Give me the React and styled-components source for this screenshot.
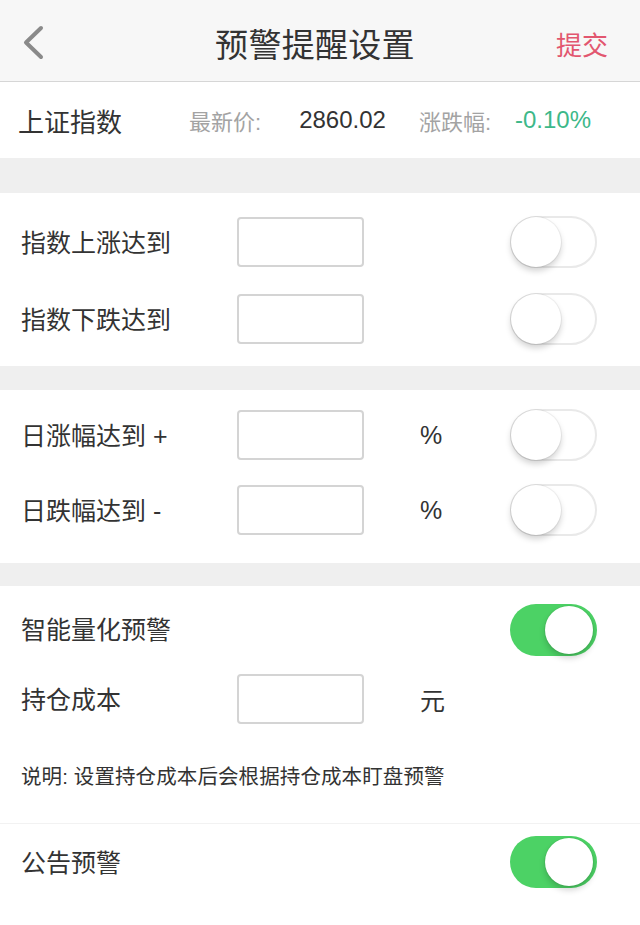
import React, { useState } from "react";
import styled, { createGlobalStyle } from "styled-components";

const Global = createGlobalStyle`
  html, body { margin: 0; padding: 0; }
  body {
    font-family: "Liberation Sans", "Noto Sans CJK SC", sans-serif;
    background: #efefef;
    color: #333;
  }
  * { box-sizing: border-box; }
`;

const Page = styled.div`
  width: 640px;
  min-height: 925px;
  display: flex;
  flex-direction: column;
  background: #efefef;
`;

const NavBar = styled.header`
  height: 82px;
  background: #f7f7f7;
  border-bottom: 1px solid #d6d6d6;
  display: grid;
  grid-template-columns: 1fr auto 1fr;
  align-items: center;
  padding: 5px 32px 0 22px;
`;

const BackButton = styled.button`
  justify-self: start;
  border: 0;
  background: none;
  padding: 0;
  display: flex;
  align-items: center;
  cursor: pointer;
`;

const Title = styled.h1`
  margin: 0;
  font-size: 33px;
  font-weight: 400;
  color: #333;
  letter-spacing: 0.3px;
`;

const SubmitButton = styled.button`
  justify-self: end;
  border: 0;
  background: none;
  padding: 0;
  font-family: inherit;
  font-size: 26px;
  color: #e2566f;
  cursor: pointer;
`;

const InfoRow = styled.div`
  height: 76px;
  background: #fff;
  display: flex;
  align-items: center;
  padding-left: 18px;
`;

const IndexName = styled.span`
  font-size: 26px;
  color: #333;
  width: 171px;
`;

const InfoLabel = styled.span`
  font-size: 22px;
  color: #a3a3a3;
  margin-right: ${(p) => p.$gap}px;
`;

const InfoValue = styled.span`
  font-size: 24px;
  color: ${(p) => p.$color || "#333"};
  margin-right: ${(p) => p.$gap || 0}px;
`;

const Section = styled.section`
  background: #fff;
  margin-top: ${(p) => p.$mt}px;
  padding: ${(p) => p.$pt}px 0 ${(p) => p.$pb}px;
  display: flex;
  flex-direction: column;
  gap: ${(p) => p.$gap || 0}px;
  flex: ${(p) => (p.$grow ? 1 : "none")};
  border-bottom: ${(p) => (p.$divider ? "1px solid #f2f2f2" : "none")};
`;

const Row = styled.div`
  height: ${(p) => p.$h || 50}px;
  margin-top: ${(p) => p.$mt || 0}px;
  display: grid;
  grid-template-columns: 216px 127px 1fr 87px;
  align-items: center;
  padding: 0 43px 0 21px;
`;

const Label = styled.span`
  font-size: 25px;
  color: #333;
  white-space: nowrap;
  margin-top: -3px;
`;

const InputBox = styled.input`
  width: 127px;
  height: 50px;
  border: 2px solid #d4d4d4;
  border-radius: 4px;
  background: #fff;
  font-size: 22px;
  padding: 0 8px;
  outline: none;
`;

const Unit = styled.span`
  font-size: 25px;
  color: #333;
  padding-left: 56px;
`;

const Track = styled.button`
  position: relative;
  width: 87px;
  height: 52px;
  border-radius: 26px;
  padding: 0;
  cursor: pointer;
  border: ${(p) => (p.$on ? "0" : "2px solid #e9e9e9")};
  background: ${(p) => (p.$on ? "#4cd265" : "#fff")};
`;

const Knob = styled.span`
  position: absolute;
  top: ${(p) => (p.$on ? 2 : -1)}px;
  left: ${(p) => (p.$on ? "35px" : "-1px")};
  width: ${(p) => (p.$on ? 48 : 50)}px;
  height: ${(p) => (p.$on ? 48 : 50)}px;
  border-radius: 50%;
  background: #fff;
  box-shadow: 0 4px 6px rgba(0, 0, 0, 0.18), 0 0 0 1px rgba(0, 0, 0, 0.05);
`;

const Note = styled.p`
  margin: 39px 0 0;
  padding-left: 21px;
  font-size: 20.5px;
  letter-spacing: 0.1px;
  line-height: 28px;
  color: #333;
`;

function Toggle({ initial }) {
  const [on, setOn] = useState(initial);
  return (
    <Track $on={on} onClick={() => setOn(!on)} aria-pressed={on}>
      <Knob $on={on} />
    </Track>
  );
}

function Chevron() {
  return (
    <svg width="24" height="36" viewBox="0 0 24 36">
      <polyline
        points="19,3 4,17.5 19,32"
        fill="none"
        stroke="#8a8a8a"
        strokeWidth="4"
        strokeLinecap="round"
        strokeLinejoin="round"
      />
    </svg>
  );
}

export default function App() {
  return (
    <>
      <Global />
      <Page>
        <NavBar>
          <BackButton aria-label="back">
            <Chevron />
          </BackButton>
          <Title>预警提醒设置</Title>
          <SubmitButton>提交</SubmitButton>
        </NavBar>

        <InfoRow>
          <IndexName>上证指数</IndexName>
          <InfoLabel $gap={38}>最新价:</InfoLabel>
          <InfoValue $gap={33}>2860.02</InfoValue>
          <InfoLabel $gap={24}>涨跌幅:</InfoLabel>
          <InfoValue $color="#3db889">-0.10%</InfoValue>
        </InfoRow>

        <Section $mt={35} $pt={23} $pb={23} $gap={27}>
          <Row>
            <Label>指数上涨达到</Label>
            <InputBox />
            <span />
            <Toggle initial={false} />
          </Row>
          <Row>
            <Label>指数下跌达到</Label>
            <InputBox />
            <span />
            <Toggle initial={false} />
          </Row>
        </Section>

        <Section $mt={24} $pt={19} $pb={29} $gap={25}>
          <Row>
            <Label>日涨幅达到 +</Label>
            <InputBox />
            <Unit>%</Unit>
            <Toggle initial={false} />
          </Row>
          <Row>
            <Label>日跌幅达到 -</Label>
            <InputBox />
            <Unit>%</Unit>
            <Toggle initial={false} />
          </Row>
        </Section>

        <Section $mt={23} $pt={17} $pb={32} $divider>
          <Row $h={53}>
            <Label>智能量化预警</Label>
            <span />
            <span />
            <Toggle initial={true} />
          </Row>
          <Row $mt={18}>
            <Label>持仓成本</Label>
            <InputBox />
            <Unit>元</Unit>
            <span />
          </Row>
          <Note>说明: 设置持仓成本后会根据持仓成本盯盘预警</Note>
        </Section>

        <Section $mt={0} $pt={12} $pb={0} $grow>
          <Row $h={52}>
            <Label>公告预警</Label>
            <span />
            <span />
            <Toggle initial={true} />
          </Row>
        </Section>
      </Page>
    </>
  );
}
